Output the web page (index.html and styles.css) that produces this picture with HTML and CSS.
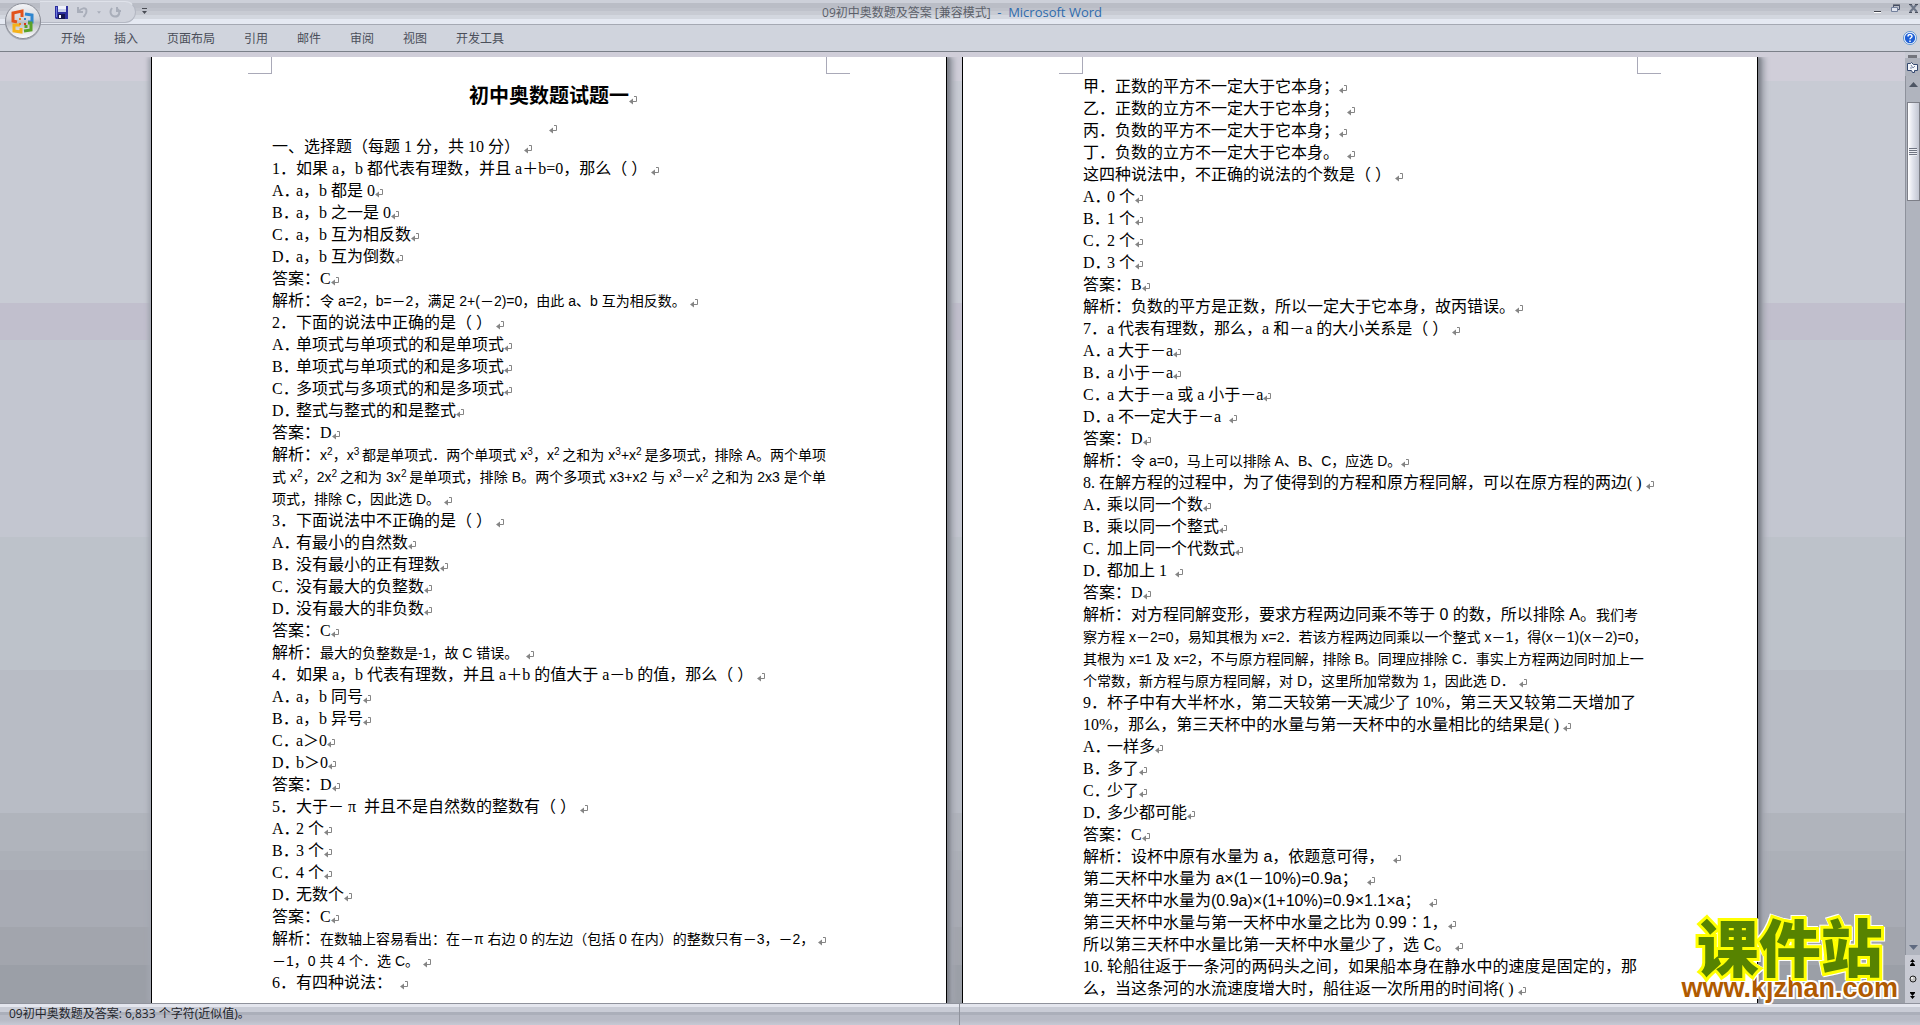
FILE: index.html
```
<!DOCTYPE html>
<html lang="zh-CN">
<head>
<meta charset="utf-8">
<title>09初中奥数题及答案 [兼容模式] - Microsoft Word</title>
<link rel="stylesheet" href="styles.css">
</head>
<body>
<header class="titlebar">
  <div class="left">
  <div class="quick">
    <button class="tool" aria-label="保存"><svg width="13" height="13" viewBox="0 0 13 13"><path d="M0 0h13v13H1L0 12z" fill="#2d2f9e"/><path d="M1 1h1v10H1z" fill="#6d7be0"/><path d="M3 0h8v6H3z" fill="#eef1fa"/><path d="M3 3h8v3H3z" fill="#c9d0ea"/><path d="M3 8h7v5H3z" fill="#15164f"/><path d="M4 9h2v3H4z" fill="#fff"/></svg></button>
    <button class="tool" aria-label="撤消"><svg width="13" height="12" viewBox="0 0 13 12"><path d="M2 1v5h5M2.500 5.500C5 2 10 1 10.500 4.500C11 7.500 9 9 7.500 11" fill="none" stroke="#a9aeba" stroke-width="2"/></svg></button>
    <button class="tool small" aria-label="撤消列表"><svg width="5" height="3" viewBox="0 0 5 3"><path d="M0 0h5L2.500 3z" fill="#a9aeba"/></svg></button>
    <button class="tool" aria-label="重复"><svg width="13" height="12" viewBox="0 0 13 12"><path d="M8 1v4h4M3 2C0 6 2 10.500 6 10.500S11.500 7 9 3" fill="none" stroke="#a9aeba" stroke-width="2"/></svg></button>
  </div>
  <button class="tool customize" aria-label="自定义快速访问工具栏"><svg width="5" height="6" viewBox="0 0 5 6"><path d="M0 0h5v1H0zM0 3h5L2.500 6z" fill="#4a4d55"/></svg></button>
  </div>
  <h1 class="caption">09初中奥数题及答案 [兼容模式] <span class="app">&nbsp;-&nbsp; Microsoft Word</span></h1>
  <div class="winbtns">
    <button class="tool" aria-label="最小化"><svg width="9" height="9" viewBox="0 0 9 9"><path d="M1 7h7v1H1z" fill="#3f424a"/><path d="M1 8h7v1H1z" fill="#fff"/></svg></button>
    <button class="tool" aria-label="还原"><svg width="9" height="9" viewBox="0 0 9 9"><path d="M2.500 3V1.500h6v4H7" fill="none" stroke="#4c5670"/><path d="M.5 3.500h6v4h-6z" fill="#dfe3ee" stroke="#73809c"/><path d="M2 1h7" stroke="#3b4050"/></svg></button>
    <button class="tool" aria-label="关闭"><svg width="9" height="9" viewBox="0 0 9 9"><path d="M1 0l7 8M8 0L1 8" stroke="#6d7688" stroke-width="2"/><path d="M0 .5h3M6 .5h3M0 8.500h3M6 8.500h3" stroke="#4c5260"/></svg></button>
  </div>
</header>
<nav class="ribbon">
  <button class="tab">开始</button><button class="tab">插入</button><button class="tab">页面布局</button><button class="tab">引用</button><button class="tab">邮件</button><button class="tab">审阅</button><button class="tab">视图</button><button class="tab">开发工具</button>
  <button class="tool help" aria-label="帮助"><svg width="14" height="14" viewBox="0 0 14 14"><circle cx="7" cy="7" r="6.500" fill="#fff" stroke="#5f93cf"/><circle cx="7" cy="7" r="5.200" fill="#1e5fd6"/><path d="M5 5.600C5 3 9 3 9 5.300C9 6.800 7 6.700 7 8.300M7 9.500v1.400" fill="none" stroke="#fff" stroke-width="1.500"/></svg></button>
</nav>
<button class="orb" aria-label="Office 按钮"><svg width="38" height="38" viewBox="0 0 38 38">
  <defs><linearGradient id="orbfill" x1="0" y1="0" x2="0" y2="1"><stop offset="0" stop-color="#f4f5f8"/><stop offset=".45" stop-color="#d2d4da"/><stop offset=".55" stop-color="#b9bcc5"/><stop offset="1" stop-color="#fff"/></linearGradient></defs>
  <circle cx="19" cy="20" r="18" fill="#8c909a" opacity=".6"/><circle cx="19" cy="19" r="17.500" fill="url(#orbfill)" stroke="#8b8e98"/>
  <g fill="none" stroke-width="3">
    <path d="M18 15V9l-9 2v8l4 1" stroke="#e2521b"/><path d="M21 12l7 1v7h-4" stroke="#2f86cf"/>
    <path d="M16 23h-6v6l7 1v-4" stroke="#f5b21a"/><path d="M20 29l7-1v-7h-3M22 23v3" stroke="#5aa228"/>
  </g>
  <path d="M15 16h2v2h-2zM15 21h2v2h-2z" fill="#f07a1c"/><path d="M20 16h2v2h-2z" fill="#2f86cf"/><path d="M20 21h2v2h-2z" fill="#d33a1a"/>
</svg></button>

<main class="workspace">
  <div class="desk">
    <article class="paper first">
      <i class="crop left-edge"></i><i class="crop right-edge"></i>
      <h2>初中奥数题试题一</h2>
      <p class="blank"></p>
      <p>一、选择题（每题 1 分，共 10 分） </p>
      <p><b>1．</b>如果 a，b 都代表有理数，并且 a＋b=0，那么（ ） </p>
      <p><b>A．</b>a，b 都是 0</p>
      <p><b>B．</b>a，b 之一是 0</p>
      <p><b>C．</b>a，b 互为相反数</p>
      <p><b>D．</b>a，b 互为倒数</p>
      <p>答案：C</p>
      <p>解析：<span class="s">令 a=2，b=－2，满足 2+(－2)=0，由此 a、b 互为相反数。 </span></p>
      <p><b>2．</b>下面的说法中正确的是（ ） </p>
      <p><b>A．</b>单项式与单项式的和是单项式</p>
      <p><b>B．</b>单项式与单项式的和是多项式</p>
      <p><b>C．</b>多项式与多项式的和是多项式</p>
      <p><b>D．</b>整式与整式的和是整式</p>
      <p>答案：D</p>
      <p class="c">解析：<span class="s">x<sup>2</sup>，x<sup>3 </sup>都是单项式．两个单项式 x<sup>3</sup>，x<sup>2 </sup>之和为 x<sup>3</sup>+x<sup>2 </sup>是多项式，排除 A。两个单项</span></p>
      <p class="c"><span class="s">式 x<sup>2</sup>，2x<sup>2 </sup>之和为 3x<sup>2 </sup>是单项式，排除 B。两个多项式 x3+x2 与 x<sup>3</sup>－x<sup>2 </sup>之和为 2x3 是个单</span></p>
      <p><span class="s">项式，排除 C，因此选 D。 </span></p>
      <p><b>3．</b>下面说法中不正确的是（ ） </p>
      <p><b>A．</b>有最小的自然数</p>
      <p><b>B．</b>没有最小的正有理数</p>
      <p><b>C．</b>没有最大的负整数</p>
      <p><b>D．</b>没有最大的非负数</p>
      <p>答案：C</p>
      <p>解析：<span class="s">最大的负整数是-1，故 C 错误。 &nbsp;</span></p>
      <p><b>4．</b>如果 a，b 代表有理数，并且 a＋b 的值大于 a－b 的值，那么（ ） </p>
      <p><b>A．</b>a，b 同号</p>
      <p><b>B．</b>a，b 异号</p>
      <p><b>C．</b>a＞0</p>
      <p><b>D．</b>b＞0</p>
      <p>答案：D</p>
      <p><b>5．</b>大于－&nbsp;π&nbsp; 并且不是自然数的整数有（ ） </p>
      <p><b>A．</b>2 个</p>
      <p><b>B．</b>3 个</p>
      <p><b>C．</b>4 个</p>
      <p><b>D．</b>无数个</p>
      <p>答案：C</p>
      <p>解析：<span class="s">在数轴上容易看出：在－π 右边 0 的左边（包括 0 在内）的整数只有－3，－2， </span></p>
      <p><span class="s">－1，0 共 4 个．选 C。 </span></p>
      <p><b>6．</b>有四种说法： &nbsp;</p>
    </article>
    <article class="paper second">
      <i class="crop left-edge"></i><i class="crop right-edge"></i>
      <p>甲．正数的平方不一定大于它本身；</p>
      <p>乙．正数的立方不一定大于它本身； &nbsp;</p>
      <p>丙．负数的平方不一定大于它本身；</p>
      <p>丁．负数的立方不一定大于它本身。 &nbsp;</p>
      <p>这四种说法中，不正确的说法的个数是（ ） </p>
      <p><b>A．</b>0 个</p>
      <p><b>B．</b>1 个</p>
      <p><b>C．</b>2 个</p>
      <p><b>D．</b>3 个</p>
      <p>答案：B</p>
      <p>解析：负数的平方是正数，所以一定大于它本身，故丙错误。</p>
      <p><b>7．</b>a 代表有理数，那么，a 和－a 的大小关系是（ ） </p>
      <p><b>A．</b>a 大于－a</p>
      <p><b>B．</b>a 小于－a</p>
      <p><b>C．</b>a 大于－a 或 a 小于－a</p>
      <p><b>D．</b>a 不一定大于－a &nbsp;</p>
      <p>答案：D</p>
      <p>解析：<span class="s">令 a=0，马上可以排除 A、B、C，应选 D。</span></p>
      <p>8. 在解方程的过程中，为了使得到的方程和原方程同解，可以在原方程的两边( ) </p>
      <p><b>A．</b>乘以同一个数</p>
      <p><b>B．</b>乘以同一个整式</p>
      <p><b>C．</b>加上同一个代数式</p>
      <p><b>D．</b>都加上 1 &nbsp;</p>
      <p>答案：D</p>
      <p class="c">解析：<span class="m">对方程同解变形，要求方程两边同乘不等于 0 的数，所以排除 A。</span><span class="s">我们考</span></p>
      <p class="c"><span class="s">察方程 x－2=0，易知其根为 x=2．若该方程两边同乘以一个整式 x－1，得(x－1)(x－2)=0，</span></p>
      <p class="c"><span class="s">其根为 x=1 及 x=2，不与原方程同解，排除 B。同理应排除 C．事实上方程两边同时加上一</span></p>
      <p><span class="s">个常数，新方程与原方程同解，对 D，这里所加常数为 1，因此选 D． </span></p>
      <p class="p9"><b>9．</b>杯子中有大半杯水，第二天较第一天减少了 10%，第三天又较第二天增加了</p>
      <p>10%，那么，第三天杯中的水量与第一天杯中的水量相比的结果是( ) </p>
      <p><b>A．</b>一样多</p>
      <p><b>B．</b>多了</p>
      <p><b>C．</b>少了</p>
      <p><b>D．</b>多少都可能</p>
      <p>答案：C</p>
      <p>解析：<span class="m">设杯中原有水量为 a，依题意可得， &nbsp;</span></p>
      <p><span class="m">第二天杯中水量为 a×(1－10%)=0.9a； &nbsp;</span></p>
      <p><span class="m">第三天杯中水量为(0.9a)×(1+10%)=0.9×1.1×a； &nbsp;</span></p>
      <p><span class="m">第三天杯中水量与第一天杯中水量之比为 0.99∶1，</span></p>
      <p><span class="m">所以第三天杯中水量比第一天杯中水量少了，选 C。 </span></p>
      <p class="c">10. 轮船往返于一条河的两码头之间，如果船本身在静水中的速度是固定的，那</p>
      <p>么，当这条河的水流速度增大时，船往返一次所用的时间将( ) </p>
    </article>
  </div>
  <aside class="scroll">
    <div class="split"></div>
    <button class="tool ruler" aria-label="标尺"><svg width="13" height="13" viewBox="0 0 13 13"><path d="M1.500 2.500h3l1-1l2 2h4v6h-3v2h-2l-1-2h-4z" fill="#f4f6fb" stroke="#34486f"/><path d="M5 4l2 3l2-2M4 7h2" fill="none" stroke="#7987a5"/></svg></button>
    <div class="track">
      <button class="tool" aria-label="向上滚动"><svg width="9" height="5" viewBox="0 0 9 5"><path d="M0 5h9L4.500 0z" fill="#4d5563"/></svg></button>
      <div class="thumb"><i></i></div>
      <button class="tool down" aria-label="向下滚动"><svg width="9" height="5" viewBox="0 0 9 5"><path d="M0 0h9L4.500 5z" fill="#5f6a80"/></svg></button>
    </div>
    <div class="browse">
      <button class="tool" aria-label="前一页"><svg width="7" height="7" viewBox="0 0 7 7"><path d="M3.500 0L6 3H1zM3.500 3L6 6H1zM1 6h5v1H1z"/></svg></button>
      <button class="tool" aria-label="选择浏览对象"><svg width="8" height="8" viewBox="0 0 8 8"><circle cx="4" cy="4" r="3" fill="#c4c4c4" stroke="#222"/><circle cx="3" cy="3" r="1" fill="#fff"/></svg></button>
      <button class="tool" aria-label="下一页"><svg width="7" height="7" viewBox="0 0 7 7"><path d="M3.500 7L6 4H1zM3.500 4L6 1H1zM1 0h5v1H1z"/></svg></button>
    </div>
  </aside>
  <a class="brand" href="#"><span class="name">课件站</span><span class="url">www.kjzhan.com</span></a>
</main>
<footer class="status"><span class="count">09初中奥数题及答案: 6,833 个字符(近似值)。</span></footer>
</body>
</html>
```
FILE: styles.css
```
* { box-sizing: border-box; margin: 0; padding: 0; }
body {
  position: relative;
  display: flex;
  flex-direction: column;
  height: 100vh;
  overflow: hidden;
  background: #d0d4dd;
  font: 12px/16px "Open Sans", "Noto Sans CJK SC", sans-serif;
  color: #4b4f5a;
}
button { border: 0; background: none; font: inherit; color: inherit; }
.tool { display: flex; align-items: center; justify-content: center; }

.titlebar {
  flex: none;
  display: grid;
  grid-template-columns: 1fr auto 1fr;
  align-items: start;
  height: 25px;
  border-bottom: 1px solid #a5a9b3;
  background: linear-gradient(#cdd0d9 0 3px, #babdc6 3px 8px, #bfc2cb 8px 11px, #c8cbd3 11px 15px, #d3d7df 15px 19px, #e5e9f2 19px);
}
.left { display: flex; align-items: flex-start; padding-left: 40px; }
.quick {
  display: flex;
  align-items: center;
  gap: 8px;
  width: 96px;
  height: 22px;
  margin-top: 1px;
  padding-left: 15px;
  border: 1px solid #b4b8c3;
  border-top-color: #dfe2ea;
  border-left: 0;
  border-radius: 0 11px 11px 0;
  background: #d0d3dc;
}
.quick .small { width: 4px; }
.customize { margin: 8px 0 0 6px; }
.caption {
  padding-left: 4px;
  font-size: 12px;
  line-height: 24px;
  font-weight: 400;
  color: #5b5f69;
  white-space: nowrap;
}
.app { font-size: 13px; color: #2f6bad; }
.winbtns { display: flex; justify-content: flex-end; gap: 9px; padding: 4px 2px 0 0; }

.ribbon {
  flex: none;
  display: flex;
  align-items: center;
  height: 27px;
  padding-left: 47px;
  border-bottom: 1px solid #7b8089;
}
.tab { padding: 2px 14px 0; line-height: 24px; }
.tab + .tab { margin-left: 1px; }
.help { margin-left: auto; margin-right: 3px; }
.orb { position: absolute; left: 4px; top: 2px; height: 38px; }

.workspace {
  position: relative;
  flex: 1;
  min-height: 0;
  display: flex;
  background: linear-gradient(#d0ced9 0 3%, #c8cbd4 3% 26.4%, #c1bfcd 26.4% 30.3%, #c3c6d0 30.3% 51%, #bdc2ca 51% 65%, #b8bcc5 65% 80%, #b0b4bc 80% 84%, #acb0b8 84% 86%, #a8abb4 86% 92%, #a2a5ad 92% 96%, #9b9fa7 96%);
}
.desk {
  flex: 1;
  display: flex;
  justify-content: center;
  gap: 15px;
  padding: 5px 0 0 4px;
}
.paper {
  position: relative;
  width: 796px;
  padding: 0 120px;
  border: solid #000;
  border-width: 0 1px;
  background: #fff;
  box-shadow: 3px 0 3px #7e828a, 7px 0 5px #a3a6b0, -3px 0 4px #a3a6b0;
  color: #000;
  font: 16px/22px "Liberation Serif", "Noto Sans CJK SC", serif;
  text-spacing-trim: space-all;
}
.first { padding-top: 23px; clip-path: inset(0 -15px 0 -15px); }
.second { padding-top: 19px; clip-path: inset(0 -15px 0 0); }
.crop { position: absolute; top: 0; width: 24px; height: 17px; border-bottom: 1px solid #a9a9b8; }
.left-edge { left: 96px; border-right: 1px solid #a9a9b8; }
.right-edge { right: 96px; border-left: 1px solid #a9a9b8; }
.paper h2 { padding-left: 8px; font-size: 20px; line-height: 32px; font-weight: 700; text-align: center; }
.paper p { height: 22px; white-space: nowrap; }
.paper p.blank { height: 24px; line-height: 30px; text-align: center; padding-left: 8px; }
.paper b { display: inline-block; width: 24px; font-weight: inherit; }
.paper h2::after, .paper p::after {
  content: "";
  display: inline-block;
  width: 8px;
  height: 9px;
  background: url("data:image/svg+xml,%3Csvg xmlns='http://www.w3.org/2000/svg' viewBox='0 0 8 9'%3E%3Cpath d='M5 .5h2.500V5.500H3' fill='none' stroke='%23858585'/%3E%3Cpath d='M0 5.500L4 2.500v6z' fill='%23858585'/%3E%3C/svg%3E") no-repeat;
  vertical-align: -2px;
}
.paper p.c { text-align: justify; text-align-last: justify; }
.paper p.c::after, .paper p.p9::after { content: none; }
.s { font-family: "Liberation Sans", "Noto Sans CJK SC", sans-serif; font-size: 14px; }
.m { font-family: "Liberation Sans", "Noto Sans CJK SC", sans-serif; }
sup { font-size: 10px; line-height: 0; vertical-align: 5px; }

.scroll {
  flex: none;
  display: flex;
  flex-direction: column;
  width: 15px;
  padding-top: 3px;
  background: #c8cad3;
}
.split { height: 3px; margin: 0 3px; background: #73757d; }
.ruler { height: 18px; background: #aeb2bc; }
.track {
  flex: 1;
  display: flex;
  flex-direction: column;
  align-items: center;
  padding: 4px 0;
  border-left: 1px solid #8e929c;
  background: #b0b4be;
}
.track .tool { height: 8px; }
.thumb {
  display: flex;
  align-items: center;
  justify-content: center;
  width: 13px;
  height: 99px;
  margin-top: 14px;
  border: 1px solid #7d7f88;
  background: linear-gradient(90deg, #fff, #e3e5ee 40%, #c2c6d2);
}
.thumb i { width: 8px; height: 8px; background: repeating-linear-gradient(#6f7482 0 1px, #eceef4 1px 2px); }
.down { margin-top: auto; }
.browse {
  display: flex;
  flex-direction: column;
  align-items: center;
  justify-content: space-around;
  height: 48px;
}

.brand {
  position: absolute;
  right: 22px;
  bottom: 1px;
  display: flex;
  flex-direction: column;
  align-items: center;
  text-decoration: none;
  paint-order: stroke fill;
}
.name {
  font: 900 62px/60px "Noto Sans CJK SC", sans-serif;
  color: #578300;
  -webkit-text-stroke: 6px #ff0;
  filter: drop-shadow(1px 1px 0 #fff) drop-shadow(-1px -1px 0 #fff);
}
.url {
  font: 700 27px/27px "Liberation Sans", sans-serif;
  color: #b05a00;
  -webkit-text-stroke: 4px #fff;
}

.status {
  flex: none;
  display: flex;
  height: 22px;
  border-top: 1px solid #8f929c;
  background: linear-gradient(#e4e6ee 0 3px, #c9ccd6 3px 8px, #abafba 8px 11px, #b8bbc6 11px 16px, #c6c9d4);
  color: #23252b;
  line-height: 20px;
}
.count { width: 50%; padding-left: 9px; border-right: 1px solid #90939d; }
```
